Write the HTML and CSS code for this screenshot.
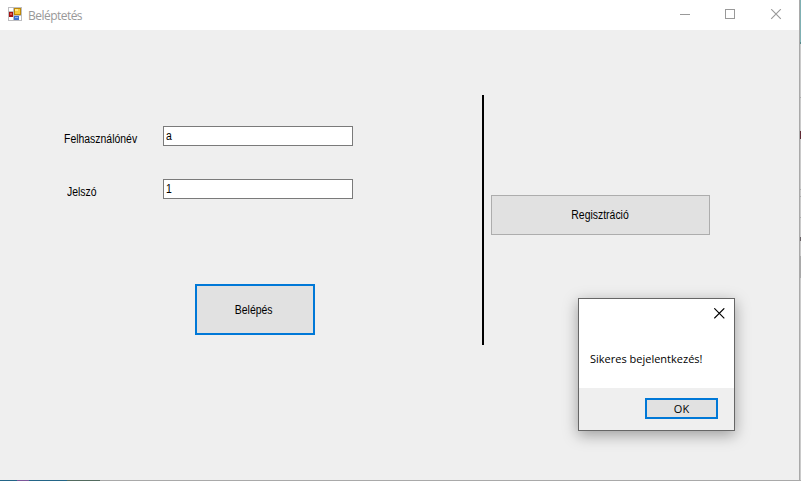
FILE: index.html
```html
<!DOCTYPE html>
<html lang="hu">
<head>
<meta charset="utf-8">
<title>Beléptetés</title>
<link rel="stylesheet" href="styles.css">
</head>
<body>
<div class="window">
  <header class="titlebar">
    <svg class="app-icon" width="14" height="14" viewBox="0 0 14 14" shape-rendering="crispEdges">
      <rect width="14" height="14" fill="#bdbdc0"/>
      <path fill="#fff" d="M1 1h4v3H1zM1 10h4v3H1zM6 9h7v4H6z"/>
      <rect x="1" y="5" width="4" height="5" fill="#a31212"/>
      <rect x="2" y="6" width="2" height="2" fill="#dc5a4c"/>
      <rect x="6" y="1" width="7" height="7" fill="#bd8808"/>
      <rect x="7" y="2" width="5" height="5" fill="#f6c93c"/>
      <rect x="7" y="2" width="3" height="2" fill="#ffe58a"/>
      <rect x="6" y="9" width="5" height="4" fill="#3c70cf"/>
      <rect x="7" y="10" width="3" height="1" fill="#89b1f5"/>
    </svg>
    <h1 class="title">Beléptetés</h1>
    <svg class="controls" width="102" height="11" viewBox="0 0 102 11" fill="none" stroke="#999">
      <path d="M0 5.5h10M45.500 .5h9v9h-9z" shape-rendering="crispEdges"/>
      <path d="M91.200 .2l9.600 9.600M100.800 .2l-9.600 9.600" stroke-width="1.150"/>
    </svg>
  </header>
  <main class="content">
    <form class="login">
      <label class="row"><span class="label"><span class="narrow">Felhasználónév</span></span><span class="field"><span class="narrow">a</span></span></label>
      <label class="row"><span class="label pass"><span class="narrow">Jelszó</span></span><span class="field"><span class="narrow">1</span></span></label>
      <button type="button" class="btn login-btn"><span class="narrow centered">Belépés</span></button>
    </form>
    <div class="divider"></div>
    <button type="button" class="btn register-btn"><span class="narrow centered">Regisztráció</span></button>
  </main>
</div>
<div class="edge-right"></div>
<div class="edge-bottom"></div>
<section class="dialog">
  <div class="dialog-body">
    <svg class="dialog-close" width="11" height="11" viewBox="0 0 11 11" fill="none" stroke="#000" stroke-width="1.150"><path d="M.3 .3l10 10M10.300 .3l-10 10"/></svg>
    <p class="message">Sikeres bejelentkezés!</p>
  </div>
  <footer class="dialog-footer"><button type="button" class="btn ok-btn">OK</button></footer>
</section>
</body>
</html>
```
FILE: styles.css
```css
* { box-sizing: border-box; }
body {
  margin: 0;
  width: 801px;
  height: 481px;
  overflow: hidden;
  display: grid;
  grid-template: 480px 1px / 799px 2px;
  font: 12px/14px "Liberation Sans", sans-serif;
  color: #000;
}
.window { background: #efefef; }
.titlebar {
  height: 30px;
  padding: 0 20px 0 8px;
  display: flex;
  align-items: center;
  background: #fff;
}
.app-icon { margin-top: -2px; }
.title {
  margin: 1px 0 0 6px;
  font: 400 12px/16px "Open Sans", sans-serif;
  letter-spacing: -0.53px;
  color: #999;
}
.controls { margin: -1px -3px 0 auto; }
.content {
  display: flex;
  align-items: flex-start;
  padding-top: 65px;
}
.login { width: 482px; padding: 31px 0 0 64px; }
.row { display: flex; height: 20px; margin-bottom: 33px; }
.label { width: 99px; padding-top: 6px; white-space: nowrap; }
.narrow {
  display: inline-block;
  transform: scaleX(.87);
  transform-origin: left;
}
.centered { transform-origin: center; }
.pass { padding-left: 3px; }
.field {
  width: 190px;
  height: 20px;
  padding: 2px 2px;
  border: 1px solid #7a7a7a;
  background: #fff;
}
.btn {
  display: block;
  padding: 0;
  border: 2px solid #0078d7;
  background: #e1e1e1;
  color: #000;
  font: inherit;
}
.login-btn {
  width: 120px;
  height: 51px;
  margin: 85px 0 0 131px;
  padding-right: 2px;
}
.divider { width: 2px; height: 250px; background: #000; }
.register-btn {
  width: 219px;
  height: 40px;
  margin: 100px 0 0 7px;
  border: 1px solid #adadad;
}
.edge-right {
  border-left: 1px solid #a9a9a9;
  background:
    linear-gradient(#602a35, #602a35) 0 131px / 1px 8px no-repeat,
    linear-gradient(#686064, #686064) 0 237px / 1px 4px no-repeat,
    linear-gradient(#a9a9a9, #a9a9a9) 0 256px / 1px 22px no-repeat,
    linear-gradient(#7fb0b3 0 42px, #56898b 42px 44px, #cacaca 44px 97px, #aaa 97px 98px, #cacaca 98px 189px, #aaa 189px 190px, #cacaca 190px 196px, #aaa 196px 197px, #cacaca 197px 217px, #aaa 217px 218px, #cacaca 218px);
}
.edge-bottom {
  grid-column: 1 / 3;
  background: linear-gradient(90deg, #236587 0 17px, #7c579a 17px 29px, #236587 29px 67px, #526b5e 67px 100px, #a9a9a9 100px);
}
.dialog {
  position: absolute;
  left: 578px;
  top: 298px;
  width: 157px;
  height: 133px;
  border: 1px solid #666;
  background: #fff;
  box-shadow: 0 4px 14px rgba(0, 0, 0, .35);
  font: 11px/16px "Open Sans", sans-serif;
}
.dialog-body {
  height: 89px;
  padding: 9px 9px 0 11px;
  display: flex;
  flex-direction: column;
}
.dialog-close { align-self: flex-end; }
.message { margin: 32px 0 0; white-space: nowrap; }
.dialog-footer {
  height: 42px;
  padding: 10px 16px 0 0;
  display: flex;
  justify-content: flex-end;
  background: #efefef;
}
.ok-btn { width: 73px; height: 21px; line-height: 16px; }
```
